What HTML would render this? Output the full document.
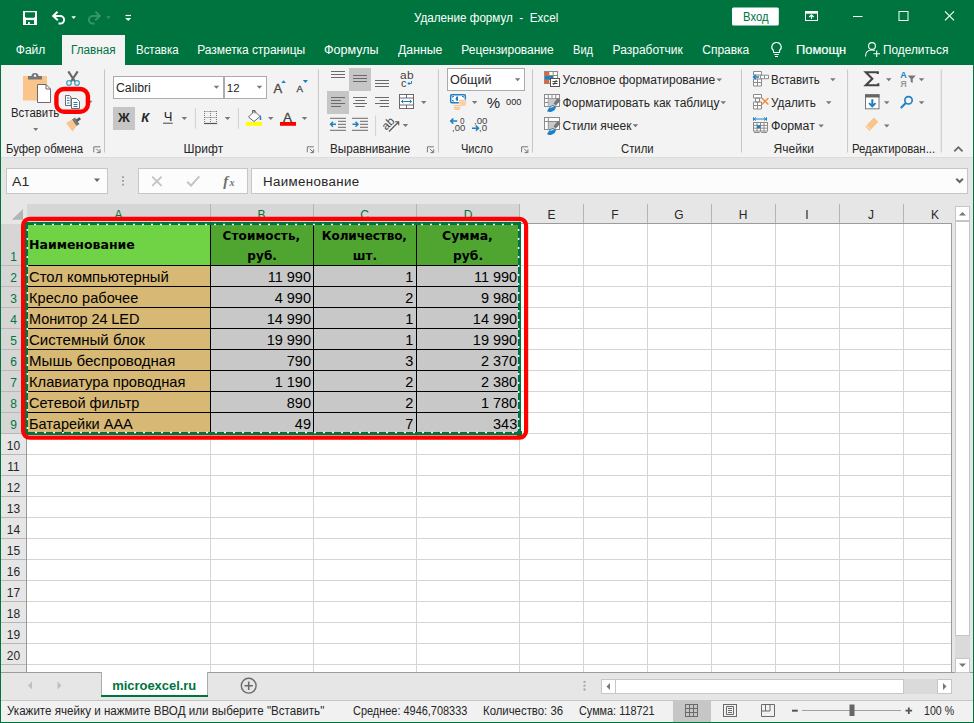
<!DOCTYPE html>
<html lang="ru"><head><meta charset="utf-8"><title>Удаление формул - Excel</title>
<style>
html,body{margin:0;padding:0}
body{width:974px;height:723px;overflow:hidden;position:relative;background:#fff;font-family:"Liberation Sans",sans-serif}
.t{position:absolute;white-space:pre}
.b{position:absolute}
svg{position:absolute;overflow:visible}
</style></head><body>
<div class="b" style="left:0px;top:0px;width:974px;height:65px;background:#00743f;"></div>
<div class="b" style="left:62px;top:35px;width:63px;height:30px;background:#f3f3f3;"></div>
<div class="b" style="left:0px;top:65px;width:974px;height:92px;background:#f3f3f3;"></div>
<div class="b" style="left:0px;top:157px;width:974px;height:1px;background:#dcdcdc;"></div>
<div class="b" style="left:0px;top:158px;width:974px;height:46px;background:#e6e6e6;"></div>
<div class="b" style="left:0px;top:204px;width:974px;height:468px;background:#fff;"></div>
<div class="b" style="left:0px;top:204px;width:952px;height:19px;background:#e6e6e6;"></div>
<div class="b" style="left:0px;top:204px;width:27px;height:468px;background:#e6e6e6;"></div>
<div class="b" style="left:27px;top:204px;width:493px;height:19px;background:#d6d6d6;"></div>
<div class="b" style="left:0px;top:224px;width:27px;height:210px;background:#d6d6d6;"></div>
<div class="b" style="left:952px;top:204px;width:22px;height:468px;background:#e6e6e6;"></div>
<div class="b" style="left:27px;top:223px;width:925px;height:1px;background:#9b9b9b;"></div>
<div class="b" style="left:26px;top:223px;width:1px;height:449px;background:#9b9b9b;"></div>
<div class="b" style="left:210px;top:204px;width:1px;height:19px;background:#b4b4b4;"></div>
<div class="b" style="left:210px;top:224px;width:1px;height:448px;background:#d4d4d4;"></div>
<div class="b" style="left:313px;top:204px;width:1px;height:19px;background:#b4b4b4;"></div>
<div class="b" style="left:313px;top:224px;width:1px;height:448px;background:#d4d4d4;"></div>
<div class="b" style="left:416px;top:204px;width:1px;height:19px;background:#b4b4b4;"></div>
<div class="b" style="left:416px;top:224px;width:1px;height:448px;background:#d4d4d4;"></div>
<div class="b" style="left:519px;top:204px;width:1px;height:19px;background:#b4b4b4;"></div>
<div class="b" style="left:519px;top:224px;width:1px;height:448px;background:#d4d4d4;"></div>
<div class="b" style="left:583px;top:204px;width:1px;height:19px;background:#b4b4b4;"></div>
<div class="b" style="left:583px;top:224px;width:1px;height:448px;background:#d4d4d4;"></div>
<div class="b" style="left:647px;top:204px;width:1px;height:19px;background:#b4b4b4;"></div>
<div class="b" style="left:647px;top:224px;width:1px;height:448px;background:#d4d4d4;"></div>
<div class="b" style="left:711px;top:204px;width:1px;height:19px;background:#b4b4b4;"></div>
<div class="b" style="left:711px;top:224px;width:1px;height:448px;background:#d4d4d4;"></div>
<div class="b" style="left:775px;top:204px;width:1px;height:19px;background:#b4b4b4;"></div>
<div class="b" style="left:775px;top:224px;width:1px;height:448px;background:#d4d4d4;"></div>
<div class="b" style="left:839px;top:204px;width:1px;height:19px;background:#b4b4b4;"></div>
<div class="b" style="left:839px;top:224px;width:1px;height:448px;background:#d4d4d4;"></div>
<div class="b" style="left:903px;top:204px;width:1px;height:19px;background:#b4b4b4;"></div>
<div class="b" style="left:903px;top:224px;width:1px;height:448px;background:#d4d4d4;"></div>
<div class="b" style="left:951px;top:224px;width:1px;height:448px;background:#9b9b9b;"></div>
<div class="b" style="left:27px;top:265px;width:924px;height:1px;background:#d4d4d4;"></div>
<div class="b" style="left:0px;top:265px;width:26px;height:1px;background:#b8b8b8;"></div>
<div class="b" style="left:27px;top:286px;width:924px;height:1px;background:#d4d4d4;"></div>
<div class="b" style="left:0px;top:286px;width:26px;height:1px;background:#b8b8b8;"></div>
<div class="b" style="left:27px;top:307px;width:924px;height:1px;background:#d4d4d4;"></div>
<div class="b" style="left:0px;top:307px;width:26px;height:1px;background:#b8b8b8;"></div>
<div class="b" style="left:27px;top:328px;width:924px;height:1px;background:#d4d4d4;"></div>
<div class="b" style="left:0px;top:328px;width:26px;height:1px;background:#b8b8b8;"></div>
<div class="b" style="left:27px;top:349px;width:924px;height:1px;background:#d4d4d4;"></div>
<div class="b" style="left:0px;top:349px;width:26px;height:1px;background:#b8b8b8;"></div>
<div class="b" style="left:27px;top:370px;width:924px;height:1px;background:#d4d4d4;"></div>
<div class="b" style="left:0px;top:370px;width:26px;height:1px;background:#b8b8b8;"></div>
<div class="b" style="left:27px;top:391px;width:924px;height:1px;background:#d4d4d4;"></div>
<div class="b" style="left:0px;top:391px;width:26px;height:1px;background:#b8b8b8;"></div>
<div class="b" style="left:27px;top:412px;width:924px;height:1px;background:#d4d4d4;"></div>
<div class="b" style="left:0px;top:412px;width:26px;height:1px;background:#b8b8b8;"></div>
<div class="b" style="left:27px;top:433px;width:924px;height:1px;background:#d4d4d4;"></div>
<div class="b" style="left:0px;top:433px;width:26px;height:1px;background:#b8b8b8;"></div>
<div class="b" style="left:27px;top:454px;width:924px;height:1px;background:#d4d4d4;"></div>
<div class="b" style="left:0px;top:454px;width:26px;height:1px;background:#b8b8b8;"></div>
<div class="b" style="left:27px;top:475px;width:924px;height:1px;background:#d4d4d4;"></div>
<div class="b" style="left:0px;top:475px;width:26px;height:1px;background:#b8b8b8;"></div>
<div class="b" style="left:27px;top:496px;width:924px;height:1px;background:#d4d4d4;"></div>
<div class="b" style="left:0px;top:496px;width:26px;height:1px;background:#b8b8b8;"></div>
<div class="b" style="left:27px;top:517px;width:924px;height:1px;background:#d4d4d4;"></div>
<div class="b" style="left:0px;top:517px;width:26px;height:1px;background:#b8b8b8;"></div>
<div class="b" style="left:27px;top:538px;width:924px;height:1px;background:#d4d4d4;"></div>
<div class="b" style="left:0px;top:538px;width:26px;height:1px;background:#b8b8b8;"></div>
<div class="b" style="left:27px;top:559px;width:924px;height:1px;background:#d4d4d4;"></div>
<div class="b" style="left:0px;top:559px;width:26px;height:1px;background:#b8b8b8;"></div>
<div class="b" style="left:27px;top:580px;width:924px;height:1px;background:#d4d4d4;"></div>
<div class="b" style="left:0px;top:580px;width:26px;height:1px;background:#b8b8b8;"></div>
<div class="b" style="left:27px;top:601px;width:924px;height:1px;background:#d4d4d4;"></div>
<div class="b" style="left:0px;top:601px;width:26px;height:1px;background:#b8b8b8;"></div>
<div class="b" style="left:27px;top:622px;width:924px;height:1px;background:#d4d4d4;"></div>
<div class="b" style="left:0px;top:622px;width:26px;height:1px;background:#b8b8b8;"></div>
<div class="b" style="left:27px;top:643px;width:924px;height:1px;background:#d4d4d4;"></div>
<div class="b" style="left:0px;top:643px;width:26px;height:1px;background:#b8b8b8;"></div>
<div class="b" style="left:27px;top:664px;width:924px;height:1px;background:#d4d4d4;"></div>
<div class="b" style="left:0px;top:664px;width:26px;height:1px;background:#b8b8b8;"></div>
<div class="b" style="left:27px;top:224px;width:183px;height:41px;background:#70d245;"></div>
<div class="b" style="left:211px;top:224px;width:308px;height:41px;background:#4fa530;"></div>
<div class="b" style="left:27px;top:266px;width:183px;height:167px;background:#d7b875;"></div>
<div class="b" style="left:211px;top:266px;width:308px;height:167px;background:#c8c8c8;"></div>
<div class="b" style="left:210px;top:224px;width:1px;height:209px;background:#000;"></div>
<div class="b" style="left:313px;top:224px;width:1px;height:209px;background:#000;"></div>
<div class="b" style="left:416px;top:224px;width:1px;height:209px;background:#000;"></div>
<div class="b" style="left:27px;top:265px;width:492px;height:1px;background:#000;"></div>
<div class="b" style="left:27px;top:286px;width:492px;height:1px;background:#000;"></div>
<div class="b" style="left:27px;top:307px;width:492px;height:1px;background:#000;"></div>
<div class="b" style="left:27px;top:328px;width:492px;height:1px;background:#000;"></div>
<div class="b" style="left:27px;top:349px;width:492px;height:1px;background:#000;"></div>
<div class="b" style="left:27px;top:370px;width:492px;height:1px;background:#000;"></div>
<div class="b" style="left:27px;top:391px;width:492px;height:1px;background:#000;"></div>
<div class="b" style="left:27px;top:412px;width:492px;height:1px;background:#000;"></div>
<svg style="left:0;top:0" width="974" height="723"><rect x="26.5" y="223.5" width="493" height="210" fill="none" stroke="#00743f" stroke-width="3"/><path d="M34 224.4H518M518.6 229V432M514 432.6H28M27.4 429V225" fill="none" stroke="#fff" stroke-width="1.5" stroke-dasharray="2 7"/><rect x="517" y="431" width="5" height="5" fill="#00743f"/></svg>
<div class="b" style="left:0px;top:672px;width:974px;height:28px;background:#e6e6e6;"></div>
<div class="b" style="left:0px;top:672px;width:974px;height:1px;background:#9b9b9b;"></div>
<div class="b" style="left:101px;top:672px;width:107px;height:23px;background:#fff;"></div>
<div class="b" style="left:101px;top:694.5px;width:107px;height:2.5px;background:#00743f;"></div>
<div class="b" style="left:101px;top:672px;width:1px;height:23px;background:#ababab;"></div>
<div class="b" style="left:207px;top:672px;width:1px;height:23px;background:#ababab;"></div>
<div class="b" style="left:0px;top:700px;width:974px;height:1px;background:#c6c6c6;"></div>
<div class="b" style="left:0px;top:701px;width:974px;height:22px;background:#f1f1f1;"></div>
<div class="b" style="left:0px;top:0px;width:1px;height:723px;background:#00743f;"></div>
<div class="b" style="left:972.5px;top:65px;width:1.5px;height:658px;background:#00743f;"></div>
<div class="b" style="left:0px;top:722px;width:974px;height:1px;background:#00743f;"></div>
<svg style="left:0;top:0" width="974" height="723" viewBox="0 0 974 723"><path d="M104.5 69.5V152.5" stroke="#c6c6c6" stroke-width="1"/><path d="M318.4 69.5V152.5" stroke="#c6c6c6" stroke-width="1"/><path d="M438.4 69.5V152.5" stroke="#c6c6c6" stroke-width="1"/><path d="M532.5 69.5V152.5" stroke="#c6c6c6" stroke-width="1"/><path d="M741.5 69.5V152.5" stroke="#c6c6c6" stroke-width="1"/><path d="M847.6 69.5V152.5" stroke="#c6c6c6" stroke-width="1"/><path d="M941.2 69.5V152.5" stroke="#c6c6c6" stroke-width="1"/><rect x="113.5" y="76.5" width="110" height="22" fill="#fff" stroke="#ababab" stroke-width="1"/><rect x="224.5" y="76.5" width="42" height="22" fill="#fff" stroke="#ababab" stroke-width="1"/><rect x="447.5" y="68.5" width="77" height="22" fill="#fff" stroke="#ababab" stroke-width="1"/><path d="M213.7 85.7 h5.5 l-2.75 3 z" fill="#777"/><path d="M256.7 85.7 h5.5 l-2.75 3 z" fill="#777"/><path d="M514.9 78.3 h5.5 l-2.75 3 z" fill="#777"/><rect x="113" y="107" width="22" height="23" fill="#c6c6c6"/><rect x="349" y="68" width="22" height="23" fill="#c6c6c6"/><rect x="327" y="91" width="22" height="23" fill="#c6c6c6"/><rect x="23" y="76" width="24" height="24.5" fill="#fbc48b"/><path d="M28 79.5v-3.5h3.5a3.5 3 0 0 1 7 0h3.5v3.5z" fill="#777"/><circle cx="35" cy="75.7" r="1.2" fill="#f3f3f3"/><path d="M37.5 84.5h8.5l4.5 4.5v13.5h-13z" fill="#fff" stroke="#6a6a6a" stroke-width="1"/><path d="M46 84.5v4.5h4.5" fill="none" stroke="#6a6a6a" stroke-width="1"/><path d="M33.2 128 h5 l-2.5 3 z" fill="#777"/><path d="M68.3 71.3l6.700 10.200M77.700 71.300l-6.700 10.200" stroke="#666" stroke-width="2.100" fill="none"/><circle cx="69" cy="83" r="2.3" fill="none" stroke="#3fa7c4" stroke-width="1.3"/><circle cx="77" cy="83" r="2.3" fill="none" stroke="#3fa7c4" stroke-width="1.3"/><path d="M65.5 95.5h4l1.5 1.5v8.5h-5.5z" fill="#fff" stroke="#6a6a6a"/><path d="M71.500 98.500h5l3 3v7h-8z" fill="#fff" stroke="#6a6a6a"/><path d="M67 98h2.5M67 100.5h2.5M67 103h2.5M73.500 102.500h4M73.500 104.500h4M73.500 106.500h4" stroke="#1e7fc2" stroke-width="1"/><path d="M87 100.8 h5.5 l-2.75 3 z" fill="#777"/><rect x="56.400" y="89" width="31.500" height="22.700" rx="7.500" ry="7.500" fill="none" stroke="#ff0000" stroke-width="4.400"/><path d="M66 123l6 -3.5 4.5 6.5 -4 5.5z" fill="#fbc48b"/><path d="M72 119.5l3-2 4.5 6.5-3 2z" fill="#777"/><path d="M76 119.5l3.5-2.3 1.5 2-3.5 2.5z" fill="#555"/><path d="M93.8 152.3v-5.5h6.5" fill="none" stroke="#777" stroke-width="1"/><path d="M96.3 148.8l3.5 3.5m0.3 -3v3.3h-3.3" fill="none" stroke="#777" stroke-width="1"/><path d="M281.3 83l2.3-2.8 2.3 2.8z" fill="#1e7fc2"/><path d="M302.8 80h5.2l-2.6 3z" fill="#1e7fc2"/><path d="M163 123.2H172.7" stroke="#444" stroke-width="1"/><path d="M181.6 116.9 h5.5 l-2.75 3 z" fill="#777"/><path d="M195.4 108V128.7" stroke="#d0d0d0" stroke-width="1"/><path d="M204.5 111.5H217" stroke="#777" stroke-width="1" stroke-dasharray="1 1"/><path d="M204.5 117.5H217" stroke="#777" stroke-width="1" stroke-dasharray="1 1"/><path d="M204.5 111V123" stroke="#777" stroke-width="1" stroke-dasharray="1 1"/><path d="M210.5 111V123" stroke="#777" stroke-width="1" stroke-dasharray="1 1"/><path d="M216.5 111V123" stroke="#777" stroke-width="1" stroke-dasharray="1 1"/><path d="M204 123.5H217.2" stroke="#555" stroke-width="1.2"/><path d="M224.8 116.9 h5.5 l-2.75 3 z" fill="#777"/><path d="M238.4 108V128.7" stroke="#d0d0d0" stroke-width="1"/><path d="M248.5 117l6-6 5.5 5.5-6 5z" fill="#fff" stroke="#666" stroke-width="1"/><path d="M252.5 113v-2.5h2.5v3" fill="none" stroke="#666" stroke-width="1"/><path d="M260 114.5q2 2.5 1.3 5.5h-1.6z" fill="#1e7fc2"/><rect x="245.8" y="122" width="16.3" height="3.8" fill="#ffff00"/><path d="M268 116.9 h5.5 l-2.75 3 z" fill="#777"/><rect x="280" y="122" width="16" height="3.8" fill="#ff0000"/><path d="M301.8 116.9 h5.5 l-2.75 3 z" fill="#777"/><path d="M307.3 152.3v-5.5h6.5" fill="none" stroke="#777" stroke-width="1"/><path d="M309.8 148.8l3.5 3.5m0.3 -3v3.3h-3.3" fill="none" stroke="#777" stroke-width="1"/><path d="M331 71.5H345" stroke="#6a6a6a" stroke-width="1"/><path d="M331 74.5H345" stroke="#6a6a6a" stroke-width="1"/><path d="M331 77.5H345" stroke="#6a6a6a" stroke-width="1"/><path d="M353 75.5H367" stroke="#6a6a6a" stroke-width="1"/><path d="M353 78.5H367" stroke="#6a6a6a" stroke-width="1"/><path d="M353 81.5H367" stroke="#6a6a6a" stroke-width="1"/><path d="M375 80.5H389" stroke="#6a6a6a" stroke-width="1"/><path d="M375 83.5H389" stroke="#6a6a6a" stroke-width="1"/><path d="M375 86.5H389" stroke="#6a6a6a" stroke-width="1"/><path d="M331 97.5H345" stroke="#6a6a6a" stroke-width="1"/><path d="M353 97.5H367" stroke="#6a6a6a" stroke-width="1"/><path d="M375 97.5H389" stroke="#6a6a6a" stroke-width="1"/><path d="M331 100.5H341" stroke="#6a6a6a" stroke-width="1"/><path d="M355.3 100.5H364.8" stroke="#6a6a6a" stroke-width="1"/><path d="M379.7 100.5H389" stroke="#6a6a6a" stroke-width="1"/><path d="M331 103.5H345" stroke="#6a6a6a" stroke-width="1"/><path d="M353 103.5H367" stroke="#6a6a6a" stroke-width="1"/><path d="M375 103.5H389" stroke="#6a6a6a" stroke-width="1"/><path d="M331 106.5H341" stroke="#6a6a6a" stroke-width="1"/><path d="M355.3 106.5H364.8" stroke="#6a6a6a" stroke-width="1"/><path d="M379.7 106.5H389" stroke="#6a6a6a" stroke-width="1"/><rect x="399.5" y="94.5" width="14" height="14" fill="#fff" stroke="#6a6a6a"/><path d="M399.5 98H413.5M399.5 105H413.5M406.5 94.5V98M406.5 105v3.5" stroke="#6a6a6a" fill="none"/><path d="M401.5 101.5H411.5M403.3 99.8l-1.8 1.7 1.8 1.7M409.7 99.8l1.8 1.7-1.8 1.7" stroke="#1e7fc2" fill="none" stroke-width="1"/><path d="M421 101 h5.5 l-2.75 3 z" fill="#777"/><path d="M330 118.3H346" stroke="#6a6a6a" stroke-width="1"/><path d="M330 130.3H346" stroke="#6a6a6a" stroke-width="1"/><path d="M338 121.3H346" stroke="#6a6a6a" stroke-width="1"/><path d="M338 124.3H346" stroke="#6a6a6a" stroke-width="1"/><path d="M338 127.3H346" stroke="#6a6a6a" stroke-width="1"/><path d="M352 118.3H368" stroke="#6a6a6a" stroke-width="1"/><path d="M352 130.3H368" stroke="#6a6a6a" stroke-width="1"/><path d="M360 121.3H368" stroke="#6a6a6a" stroke-width="1"/><path d="M360 124.3H368" stroke="#6a6a6a" stroke-width="1"/><path d="M360 127.3H368" stroke="#6a6a6a" stroke-width="1"/><path d="M336 124.3h-5.5m2.5-2.5l-2.5 2.5 2.5 2.5" stroke="#1e7fc2" stroke-width="1.4" fill="none"/><path d="M352.5 124.3h5.5m-2.5-2.5l2.5 2.5-2.5 2.5" stroke="#1e7fc2" stroke-width="1.4" fill="none"/><path d="M375.6 115.5V136" stroke="#d0d0d0" stroke-width="1"/><path d="M389 131.5l9.5-9.5m-3.3-.3h3.5v3.5" stroke="#555" stroke-width="1.1" fill="none"/><path d="M402.7 124 h5.5 l-2.75 3 z" fill="#777"/><path d="M427.4 152.3v-5.5h6.5" fill="none" stroke="#777" stroke-width="1"/><path d="M429.9 148.8l3.5 3.5m0.3 -3v3.3h-3.3" fill="none" stroke="#777" stroke-width="1"/><path d="M411.5 81v2.5h-3.5m1.5-1.5l-1.5 1.5 1.5 1.5" stroke="#1e7fc2" stroke-width="1" fill="none"/><rect x="450.700" y="94.700" width="14.600" height="8" rx="1" fill="#fff" stroke="#1e7fc2" stroke-width="1.500"/><path d="M452.500 97.500v-1h1.500M463.500 97.500v-1h-1.500M452.500 100v1h1.500" stroke="#1e7fc2" stroke-width="1" fill="none"/><path d="M458 96.300a2.400 2.400 0 1 0 0 4.800z" fill="#1e7fc2"/><rect x="458.800" y="99.500" width="7.600" height="7.200" fill="#f3f3f3"/><path d="M459.300 100.800h6.800M459.300 102.900h6.800M459.800 105h5.800" stroke="#fbc48b" stroke-width="1.500"/><rect x="453.300" y="104.300" width="7.600" height="5.600" fill="#f3f3f3"/><path d="M453.800 105.600h6.800M453.800 107.600h6.800M454.500 109.300h5.400" stroke="#fbc48b" stroke-width="1.400"/><path d="M471.9 101 h5.5 l-2.75 3 z" fill="#777"/><path d="M521.6 152.3v-5.5h6.5" fill="none" stroke="#777" stroke-width="1"/><path d="M524.1 148.8l3.5 3.5m0.3 -3v3.3h-3.3" fill="none" stroke="#777" stroke-width="1"/><path d="M457.2 121.1h-6.5m2.6-2.6l-2.6 2.6 2.6 2.6" stroke="#1e7fc2" stroke-width="1.5" fill="none"/><path d="M472 128.2h6.5m-2.6-2.6l2.6 2.6-2.6 2.6" stroke="#1e7fc2" stroke-width="1.5" fill="none"/><rect x="544.5" y="71.5" width="13" height="12" fill="#fff" stroke="#8a8a8a"/><path d="M548.833 71.5V83.5M553.167 71.5V83.5M544.5 75.5H557.5M544.5 79.5H557.5" stroke="#8a8a8a" fill="none"/><rect x="545" y="72" width="4" height="3.5" fill="#e8622c"/><rect x="545" y="80" width="4" height="3.5" fill="#e8622c"/><rect x="545" y="76" width="8" height="3.5" fill="#1e7fc2"/><rect x="550.5" y="78.5" width="9" height="8" fill="#fff" stroke="#555"/><path d="M552.5 81.5h5M552.5 83.5h5M556.5 80l-3 5" stroke="#333" stroke-width="0.9"/><rect x="544.5" y="94.5" width="15" height="12" fill="#fff" stroke="#8a8a8a"/><path d="M548.25 94.5V106.5M552 94.5V106.5M555.75 94.5V106.5M544.5 98.5H559.5M544.5 102.5H559.5" stroke="#8a8a8a" fill="none"/><rect x="548.5" y="98.7" width="7.2" height="7.6" fill="#c8c8c8"/><path d="M553.5 103.5l4-5.5 3 2.3-4.5 5.2z" fill="#777"/><path d="M548 109.5q2-4 5-4.5l3 2.3q-1 3.5-4.5 4.5-2 .8-4.5-.5z" fill="#1e7fc2"/><path d="M550.5 107.7q1.5-1.5 3-1" stroke="#fff" stroke-width="1" fill="none"/><rect x="544.5" y="117.5" width="15" height="12" fill="#fff" stroke="#8a8a8a"/><path d="" stroke="#8a8a8a" fill="none"/><path d="M544.5 121.5h15M548.3 117.5v12" stroke="#8a8a8a" fill="none"/><rect x="549" y="122" width="7" height="7" fill="#c8c8c8"/><path d="M553.5 126.5l4-5.5 3 2.3-4.5 5.2z" fill="#777"/><path d="M548 132.5q2-4 5-4.5l3 2.3q-1 3.5-4.5 4.5-2 .8-4.5-.5z" fill="#1e7fc2"/><path d="M550.5 130.7q1.5-1.5 3-1" stroke="#fff" stroke-width="1" fill="none"/><path d="M716.5 78.5 h5.5 l-2.75 3 z" fill="#777"/><path d="M720.5 101.3 h5.5 l-2.75 3 z" fill="#777"/><path d="M632.7 124.3 h5.5 l-2.75 3 z" fill="#777"/><path d="M753.5 71.5h8v3.5h-8zM753.5 79h8v3.5h-8zM753.5 82.500h8v3.500h-8zM757.5 79v7" fill="#fff" stroke="#8a8a8a"/><path d="M760.5 75.2h8v3.500h-8zM764.500 75.200v3.500" fill="#fff" stroke="#8a8a8a"/><path d="M759 77h-5.500m2.300-2.300l-2.300 2.300 2.300 2.300" stroke="#1e7fc2" stroke-width="1.400" fill="none"/><path d="M753.500 94.500h8v3.500h-8zM753.500 102h8v3.500h-8zM753.500 105.500h8v3.500h-8zM757.500 102v7M755.500 98h4v4h-4z" fill="#fff" stroke="#8a8a8a"/><path d="M761.800 98l6.600 6.600M768.400 98l-6.600 6.600" stroke="#ec8a3e" stroke-width="1.400"/><path d="M754 119h12M753.500 117.300v3.400M766.500 117.300v3.400M756 117.500l-1.800 1.500 1.800 1.500M764 117.500l1.800 1.500-1.800 1.500" stroke="#1e7fc2" fill="none"/><rect x="753.5" y="122.5" width="14" height="8.5" fill="#fff" stroke="#8a8a8a"/><path d="M757 122.5V131M760.5 122.5V131M764 122.5V131M753.5 125.333H767.5M753.5 128.167H767.5" stroke="#8a8a8a" fill="none"/><rect x="757" y="125.300" width="3.500" height="3" fill="#1e7fc2"/><path d="M754 132.500h5.500l1 -1 1 1h5.500" stroke="#8a8a8a" fill="none"/><path d="M830.1 78.3 h5.5 l-2.75 3 z" fill="#777"/><path d="M826 101.3 h5.5 l-2.75 3 z" fill="#777"/><path d="M818.4 124.4 h5.5 l-2.75 3 z" fill="#777"/><path d="M877.800 74v-1.800h-12l6.500 6.500-6.500 6.500h12.500v-2" fill="none" stroke="#444" stroke-width="2.100" stroke-linejoin="miter"/><path d="M886 78.3 h5.5 l-2.75 3 z" fill="#777"/><path d="M907.700 75.600h8l-3 3.500v4l-2 -1.200v-2.800z" fill="#777"/><path d="M918.8 78.3 h5.5 l-2.75 3 z" fill="#777"/><rect x="865.500" y="94.800" width="13.500" height="14" fill="#fff" stroke="#777"/><rect x="865" y="94.300" width="14.500" height="3.200" fill="#666"/><path d="M872.300 99.300v7.200m-3.200-3.400l3.200 3.300 3.200-3.300" stroke="#1e7fc2" stroke-width="2" fill="none"/><path d="M884 101.3 h5.5 l-2.75 3 z" fill="#777"/><circle cx="908.500" cy="100.300" r="3.700" fill="none" stroke="#1e7fc2" stroke-width="1.600"/><path d="M905.800 103l-5 5" stroke="#1e7fc2" stroke-width="2"/><path d="M918.8 101.3 h5.5 l-2.75 3 z" fill="#777"/><path d="M865.200 126.500l8.700-9 4.400 4.200-8.700 9.200z" fill="#fbc48b"/><path d="M866.300 125.300l4.500 4.300" stroke="#f3f3f3" stroke-width="0.800"/><path d="M865.500 127.500l4 3.500" stroke="#f3f3f3" stroke-width="0"/><path d="M884 124.5 h5.5 l-2.75 3 z" fill="#777"/><path d="M954.300 151.300l4.100-4.100 4.100 4.100" stroke="#666" stroke-width="1.800" fill="none"/><rect x="23" y="11" width="14" height="14" fill="#fff"/><path d="M25 12.200h10v4.200l-1 1.300h-8l-1-1.300z" fill="#00743f"/><rect x="26" y="20.100" width="8" height="3.900" fill="#00743f"/><rect x="28" y="22" width="1.800" height="2.100" fill="#fff"/><path d="M57.500 11.700l-4.300 4.300 4.600 4.300M53.500 16h6.800a3.800 3.800 0 0 1 0 7.600h-1.800" fill="none" stroke="#fff" stroke-width="2"/><path d="M71.400 16.200h4.600l-2.300 2.700z" fill="#fff"/><path d="M95.500 11.700l4.300 4.300-4.600 4.300M99.500 16h-6.800a3.800 3.800 0 0 0 0 7.600h1.800" fill="none" stroke="#35956a" stroke-width="2"/><path d="M106.200 16.200h4.500l-2.250 2.700z" fill="#35956a"/><path d="M125.500 15.500h5.500" stroke="#fff" stroke-width="1.200"/><path d="M125.200 18h6l-3 3z" fill="#fff"/><rect x="732" y="7.500" width="46.800" height="18" rx="1.500" fill="#fff"/><rect x="805.500" y="11.500" width="12" height="9" fill="none" stroke="#fff" stroke-width="1"/><path d="M805.500 12.800h12" stroke="#fff" stroke-width="1.800"/><path d="M811.500 19v-4.200m-2.200 2.200l2.200-2.200 2.200 2.200" stroke="#fff" stroke-width="1.200" fill="none"/><path d="M853 16.500h9.500" stroke="#fff" stroke-width="1"/><rect x="899" y="11.500" width="9" height="9" fill="none" stroke="#fff" stroke-width="1"/><path d="M945 11.300l9 9M954 11.300l-9 9" stroke="#fff" stroke-width="1.100"/><path d="M776.500 42.500a4.500 4.500 0 0 1 3 8v2h-6v-2a4.500 4.500 0 0 1 3-8zM774.300 54.500h4.400M775 56.500h3" fill="none" stroke="#fff" stroke-width="1.100"/><circle cx="872" cy="46" r="3.400" fill="none" stroke="#fff" stroke-width="1.100"/><path d="M865.500 56.500c0-4.500 3-6.500 6.500-6.500 1 0 2 .200 2.800.600" fill="none" stroke="#fff" stroke-width="1.100"/><path d="M876.700 50.500v6.500M873.500 53.700h6.500" stroke="#fff" stroke-width="1.100"/><rect x="6.5" y="168.5" width="101" height="25" fill="#fcfcfc" stroke="#c6c6c6" stroke-width="1"/><rect x="138.5" y="168.5" width="109" height="25" fill="#fcfcfc" stroke="#c6c6c6" stroke-width="1"/><rect x="251.5" y="168.5" width="716" height="25" fill="#fcfcfc" stroke="#c6c6c6" stroke-width="1"/><path d="M94 178.5 h6 l-3 3.5 z" fill="#666"/><path d="M123 176.200v10" stroke="#a0a0a0" stroke-width="2" stroke-dasharray="1.800 2"/><path d="M152.200 176.600l9.400 9.200M161.600 176.600l-9.400 9.200" stroke="#c2c2c2" stroke-width="1.800"/><path d="M187.200 181.800l3.800 3.800 8.300-9.300" stroke="#c2c2c2" stroke-width="2" fill="none"/><path d="M956.300 178.700l3.300 3.300 3.300-3.300" stroke="#666" stroke-width="2" fill="none"/><path d="M23 209v10.700h-11.200z" fill="#b5b5b5"/><rect x="955" y="636" width="15" height="22" fill="#dadada"/><rect x="904" y="679" width="33" height="15" fill="#dadada"/><rect x="955.5" y="206.5" width="14" height="14" fill="#fff" stroke="#c6c6c6" stroke-width="1"/><path d="M959 215.500l3.500-3.500 3.500 3.500z" fill="#777"/><rect x="955.5" y="221.5" width="14" height="414" fill="#fff" stroke="#c6c6c6" stroke-width="1"/><rect x="955.5" y="658.5" width="14" height="14" fill="#fff" stroke="#c6c6c6" stroke-width="1"/><path d="M959 663.500h7l-3.500 3.500z" fill="#777"/><rect x="601.5" y="679.5" width="14" height="14" fill="#fff" stroke="#c6c6c6" stroke-width="1"/><path d="M610 683l-3.500 3.500 3.500 3.500z" fill="#777"/><rect x="615.5" y="679.5" width="288" height="14" fill="#fff" stroke="#c6c6c6" stroke-width="1"/><rect x="937.5" y="679.5" width="14" height="14" fill="#fff" stroke="#c6c6c6" stroke-width="1"/><path d="M943 683l3.500 3.500-3.500 3.500z" fill="#777"/><path d="M584.500 681v10" stroke="#a0a0a0" stroke-width="2" stroke-dasharray="1.800 2"/><path d="M32 681.500l-4 4 4 4z" fill="#c0c0c0"/><path d="M57.500 681.500l4 4-4 4z" fill="#c0c0c0"/><circle cx="248.700" cy="685.700" r="7.400" fill="none" stroke="#6a6a6a" stroke-width="1.400"/><path d="M244.500 685.700h8.400M248.700 681.500v8.400" stroke="#6a6a6a" stroke-width="1.600"/><rect x="673" y="701" width="38" height="21" fill="#c6c6c6"/><rect x="685.5" y="704.5" width="12" height="12" fill="none" stroke="#6a6a6a"/><path d="M689.5 704.5V716.5M693.5 704.5V716.5M685.5 708.5H697.5M685.5 712.5H697.5" stroke="#6a6a6a" fill="none"/><rect x="723.500" y="704.500" width="13" height="12" fill="none" stroke="#6a6a6a"/><path d="M726.500 706.500h7v8h-7zM728 708.500h4M728 710.500h4M728 712.500h4" fill="none" stroke="#6a6a6a"/><path d="M761.500 704.500h13v12h-13zM765.500 704.500v6.500M770 704.500v6.500M761.500 711h8.500" fill="none" stroke="#6a6a6a"/><path d="M792 710.700h5.800" stroke="#555" stroke-width="2"/><path d="M802 710.5H901" stroke="#a0a0a0" stroke-width="1"/><rect x="849.500" y="704.500" width="5" height="11.500" fill="#666"/><path d="M905.500 710.700h6.600M908.800 707.400v6.600" stroke="#555" stroke-width="1.800"/></svg>
<span class="t" style="left:413.91px;top:12.00px;font-size:12.5px;line-height:12.5px;color:#fff;transform:scaleX(0.9333);transform-origin:0 0;">Удаление формул  -  Excel</span>
<span class="t" style="left:15.84px;top:44.00px;font-size:12px;line-height:12px;color:#fff;letter-spacing:-0.065px;">Файл</span>
<span class="t" style="left:70.59px;top:44.00px;font-size:12px;line-height:12px;color:#00743f;transform:scaleX(0.9755);transform-origin:0 0;">Главная</span>
<span class="t" style="left:135.59px;top:44.00px;font-size:12px;line-height:12px;color:#fff;transform:scaleX(0.9543);transform-origin:0 0;">Вставка</span>
<span class="t" style="left:197.34px;top:44.00px;font-size:12px;line-height:12px;color:#fff;letter-spacing:-0.066px;">Разметка страницы</span>
<span class="t" style="left:324.34px;top:44.00px;font-size:12px;line-height:12px;color:#fff;transform:scaleX(1.0450);transform-origin:0 0;">Формулы</span>
<span class="t" style="left:398.09px;top:44.00px;font-size:12px;line-height:12px;color:#fff;transform:scaleX(1.0222);transform-origin:0 0;">Данные</span>
<span class="t" style="left:461.34px;top:44.00px;font-size:12px;line-height:12px;color:#fff;letter-spacing:-0.027px;">Рецензирование</span>
<span class="t" style="left:573.09px;top:44.00px;font-size:12px;line-height:12px;color:#fff;transform:scaleX(0.9241);transform-origin:0 0;">Вид</span>
<span class="t" style="left:612.59px;top:44.00px;font-size:12px;line-height:12px;color:#fff;letter-spacing:0.009px;">Разработчик</span>
<span class="t" style="left:702.34px;top:44.00px;font-size:12px;line-height:12px;color:#fff;letter-spacing:-0.043px;">Справка</span>
<span class="t" style="left:795.56px;top:44.00px;font-size:12.5px;line-height:12.5px;color:#fff;transform:scaleX(1.0299);transform-origin:0 0;-webkit-text-stroke:0.2px #fff;">Помощн</span>
<span class="t" style="left:883.34px;top:44.00px;font-size:12px;line-height:12px;color:#fff;transform:scaleX(0.9857);transform-origin:0 0;">Поделиться</span>
<span class="t" style="left:743.09px;top:11.00px;font-size:12px;line-height:12px;color:#00743f;transform:scaleX(0.9416);transform-origin:0 0;">Вход</span>
<span class="t" style="left:10.59px;top:107.00px;font-size:12px;line-height:12px;color:#262626;transform:scaleX(0.9498);transform-origin:0 0;">Вставить</span>
<span class="t" style="left:5.59px;top:143.00px;font-size:12px;line-height:12px;color:#262626;transform:scaleX(0.9451);transform-origin:0 0;">Буфер обмена</span>
<span class="t" style="left:183.59px;top:143.00px;font-size:12px;line-height:12px;color:#262626;letter-spacing:0.021px;">Шрифт</span>
<span class="t" style="left:115.84px;top:82.00px;font-size:12px;line-height:12px;color:#262626;transform:scaleX(1.0236);transform-origin:0 0;">Calibri</span>
<span class="t" style="left:226.87px;top:83.00px;font-size:11.5px;line-height:11.5px;color:#262626;letter-spacing:-0.032px;">12</span>
<span class="t" style="left:118.00px;top:111.00px;font-size:13px;line-height:13px;color:#262626;font-weight:bold;">Ж</span>
<span class="t" style="left:141.25px;top:111.00px;font-size:13px;line-height:13px;color:#262626;font-weight:bold;font-style:italic;">К</span>
<span class="t" style="left:163.75px;top:110.00px;font-size:13px;line-height:13px;color:#262626;">Ч</span>
<span class="t" style="left:329.84px;top:143.00px;font-size:12px;line-height:12px;color:#262626;transform:scaleX(0.9723);transform-origin:0 0;">Выравнивание</span>
<span class="t" style="left:460.59px;top:143.00px;font-size:12px;line-height:12px;color:#262626;transform:scaleX(0.9219);transform-origin:0 0;">Число</span>
<span class="t" style="left:449.94px;top:74.00px;font-size:12px;line-height:12px;color:#262626;transform:scaleX(1.0537);transform-origin:0 0;">Общий</span>
<span class="t" style="left:486.80px;top:95.00px;font-size:15px;line-height:15px;color:#262626;">%</span>
<span class="t" style="left:506.28px;top:97.00px;font-size:9.5px;line-height:9.5px;color:#262626;transform:scaleX(0.9739);transform-origin:0 0;">000</span>
<span class="t" style="left:562.59px;top:74.00px;font-size:12px;line-height:12px;color:#262626;">Условное форматирование</span>
<span class="t" style="left:562.59px;top:97.00px;font-size:12px;line-height:12px;color:#262626;letter-spacing:0.028px;">Форматировать как таблицу</span>
<span class="t" style="left:562.59px;top:120.00px;font-size:12px;line-height:12px;color:#262626;letter-spacing:-0.045px;">Стили ячеек</span>
<span class="t" style="left:620.59px;top:143.00px;font-size:12px;line-height:12px;color:#262626;transform:scaleX(0.9419);transform-origin:0 0;">Стили</span>
<span class="t" style="left:771.34px;top:74.00px;font-size:12px;line-height:12px;color:#262626;transform:scaleX(0.9596);transform-origin:0 0;">Вставить</span>
<span class="t" style="left:771.34px;top:97.00px;font-size:12px;line-height:12px;color:#262626;transform:scaleX(0.9780);transform-origin:0 0;">Удалить</span>
<span class="t" style="left:771.34px;top:120.00px;font-size:12px;line-height:12px;color:#262626;transform:scaleX(1.0277);transform-origin:0 0;">Формат</span>
<span class="t" style="left:773.59px;top:143.00px;font-size:12px;line-height:12px;color:#262626;letter-spacing:0.014px;">Ячейки</span>
<span class="t" style="left:851.84px;top:143.00px;font-size:12px;line-height:12px;color:#262626;transform:scaleX(0.9435);transform-origin:0 0;">Редактирован...</span>
<span class="t" style="left:12.29px;top:175.00px;font-size:13px;line-height:13px;color:#262626;letter-spacing:0.233px;transform:scaleX(1.0800);transform-origin:0 0;">A1</span>
<span class="t" style="left:262.57px;top:176.00px;font-size:12.3px;line-height:12.3px;color:#262626;letter-spacing:0.339px;transform:scaleX(1.0800);transform-origin:0 0;">Наименование</span>
<span class="t" style="left:114.49px;top:209.00px;font-size:12px;line-height:12px;color:#00743f;">A</span>
<span class="t" style="left:257.49px;top:209.00px;font-size:12px;line-height:12px;color:#00743f;">B</span>
<span class="t" style="left:360.16px;top:209.00px;font-size:12px;line-height:12px;color:#00743f;">C</span>
<span class="t" style="left:463.66px;top:209.00px;font-size:12px;line-height:12px;color:#00743f;">D</span>
<span class="t" style="left:547.49px;top:209.00px;font-size:12px;line-height:12px;color:#262626;">E</span>
<span class="t" style="left:611.33px;top:209.00px;font-size:12px;line-height:12px;color:#262626;">F</span>
<span class="t" style="left:674.33px;top:209.00px;font-size:12px;line-height:12px;color:#262626;">G</span>
<span class="t" style="left:738.66px;top:209.00px;font-size:12px;line-height:12px;color:#262626;">H</span>
<span class="t" style="left:805.33px;top:209.00px;font-size:12px;line-height:12px;color:#262626;">I</span>
<span class="t" style="left:868.00px;top:209.00px;font-size:12px;line-height:12px;color:#262626;">J</span>
<span class="t" style="left:930.99px;top:209.00px;font-size:12px;line-height:12px;color:#262626;">K</span>
<span class="t" style="left:10.16px;top:251.00px;font-size:12px;line-height:12px;color:#00743f;">1</span>
<span class="t" style="left:10.16px;top:272.00px;font-size:12px;line-height:12px;color:#00743f;">2</span>
<span class="t" style="left:10.16px;top:293.00px;font-size:12px;line-height:12px;color:#00743f;">3</span>
<span class="t" style="left:10.16px;top:314.00px;font-size:12px;line-height:12px;color:#00743f;">4</span>
<span class="t" style="left:10.16px;top:335.00px;font-size:12px;line-height:12px;color:#00743f;">5</span>
<span class="t" style="left:10.16px;top:356.00px;font-size:12px;line-height:12px;color:#00743f;">6</span>
<span class="t" style="left:10.16px;top:377.00px;font-size:12px;line-height:12px;color:#00743f;">7</span>
<span class="t" style="left:10.16px;top:398.00px;font-size:12px;line-height:12px;color:#00743f;">8</span>
<span class="t" style="left:10.16px;top:419.00px;font-size:12px;line-height:12px;color:#00743f;">9</span>
<span class="t" style="left:6.82px;top:440.00px;font-size:12px;line-height:12px;color:#262626;">10</span>
<span class="t" style="left:7.27px;top:461.00px;font-size:12px;line-height:12px;color:#262626;">11</span>
<span class="t" style="left:6.82px;top:482.00px;font-size:12px;line-height:12px;color:#262626;">12</span>
<span class="t" style="left:6.82px;top:503.00px;font-size:12px;line-height:12px;color:#262626;">13</span>
<span class="t" style="left:6.82px;top:524.00px;font-size:12px;line-height:12px;color:#262626;">14</span>
<span class="t" style="left:6.82px;top:545.00px;font-size:12px;line-height:12px;color:#262626;">15</span>
<span class="t" style="left:6.82px;top:566.00px;font-size:12px;line-height:12px;color:#262626;">16</span>
<span class="t" style="left:6.82px;top:587.00px;font-size:12px;line-height:12px;color:#262626;">17</span>
<span class="t" style="left:6.82px;top:608.00px;font-size:12px;line-height:12px;color:#262626;">18</span>
<span class="t" style="left:6.82px;top:629.00px;font-size:12px;line-height:12px;color:#262626;">19</span>
<span class="t" style="left:6.82px;top:650.00px;font-size:12px;line-height:12px;color:#262626;">20</span>
<span class="t" style="left:29.34px;top:239.00px;font-size:12px;line-height:12px;color:#000;font-family:'DejaVu Sans', 'Liberation Sans', sans-serif;font-weight:bold;transform:scaleX(1.0419);transform-origin:0 0;">Наименование</span>
<span class="t" style="left:222.59px;top:230.00px;font-size:12px;line-height:12px;color:#000;font-family:'DejaVu Sans', 'Liberation Sans', sans-serif;font-weight:bold;letter-spacing:0.098px;">Стоимость,</span>
<span class="t" style="left:247.34px;top:250.00px;font-size:12px;line-height:12px;color:#000;font-family:'DejaVu Sans', 'Liberation Sans', sans-serif;font-weight:bold;letter-spacing:0.070px;">руб.</span>
<span class="t" style="left:321.84px;top:230.00px;font-size:12px;line-height:12px;color:#000;font-family:'DejaVu Sans', 'Liberation Sans', sans-serif;font-weight:bold;letter-spacing:-0.102px;">Количество,</span>
<span class="t" style="left:352.87px;top:250.00px;font-size:12px;line-height:12px;color:#000;font-family:'DejaVu Sans', 'Liberation Sans', sans-serif;font-weight:bold;">шт.</span>
<span class="t" style="left:442.34px;top:230.00px;font-size:12px;line-height:12px;color:#000;font-family:'DejaVu Sans', 'Liberation Sans', sans-serif;font-weight:bold;transform:scaleX(1.0391);transform-origin:0 0;">Сумма,</span>
<span class="t" style="left:453.09px;top:250.00px;font-size:12px;line-height:12px;color:#000;font-family:'DejaVu Sans', 'Liberation Sans', sans-serif;font-weight:bold;transform:scaleX(1.0242);transform-origin:0 0;">руб.</span>
<span class="t" style="left:29.00px;top:270.00px;font-size:14.5px;line-height:14.5px;color:#000;transform:scaleX(1.0217);transform-origin:0 0;">Стол компьютерный</span>
<span class="t" style="left:267.72px;top:270.00px;font-size:14.5px;line-height:14.5px;color:#000;">11 990</span>
<span class="t" style="left:405.22px;top:270.00px;font-size:14.5px;line-height:14.5px;color:#000;">1</span>
<span class="t" style="left:473.92px;top:270.00px;font-size:14.5px;line-height:14.5px;color:#000;">11 990</span>
<span class="t" style="left:29.00px;top:291.00px;font-size:14.5px;line-height:14.5px;color:#000;letter-spacing:0.068px;">Кресло рабочее</span>
<span class="t" style="left:274.70px;top:291.00px;font-size:14.5px;line-height:14.5px;color:#000;">4 990</span>
<span class="t" style="left:405.22px;top:291.00px;font-size:14.5px;line-height:14.5px;color:#000;">2</span>
<span class="t" style="left:480.90px;top:291.00px;font-size:14.5px;line-height:14.5px;color:#000;">9 980</span>
<span class="t" style="left:29.00px;top:312.00px;font-size:14.5px;line-height:14.5px;color:#000;letter-spacing:-0.079px;">Монитор 24 LED</span>
<span class="t" style="left:266.64px;top:312.00px;font-size:14.5px;line-height:14.5px;color:#000;">14 990</span>
<span class="t" style="left:405.22px;top:312.00px;font-size:14.5px;line-height:14.5px;color:#000;">1</span>
<span class="t" style="left:472.84px;top:312.00px;font-size:14.5px;line-height:14.5px;color:#000;">14 990</span>
<span class="t" style="left:29.00px;top:333.00px;font-size:14.5px;line-height:14.5px;color:#000;transform:scaleX(1.0378);transform-origin:0 0;">Системный блок</span>
<span class="t" style="left:266.64px;top:333.00px;font-size:14.5px;line-height:14.5px;color:#000;">19 990</span>
<span class="t" style="left:405.22px;top:333.00px;font-size:14.5px;line-height:14.5px;color:#000;">1</span>
<span class="t" style="left:472.84px;top:333.00px;font-size:14.5px;line-height:14.5px;color:#000;">19 990</span>
<span class="t" style="left:29.00px;top:354.00px;font-size:14.5px;line-height:14.5px;color:#000;transform:scaleX(1.0395);transform-origin:0 0;">Мышь беспроводная</span>
<span class="t" style="left:286.80px;top:354.00px;font-size:14.5px;line-height:14.5px;color:#000;">790</span>
<span class="t" style="left:405.22px;top:354.00px;font-size:14.5px;line-height:14.5px;color:#000;">3</span>
<span class="t" style="left:480.90px;top:354.00px;font-size:14.5px;line-height:14.5px;color:#000;">2 370</span>
<span class="t" style="left:29.00px;top:375.00px;font-size:14.5px;line-height:14.5px;color:#000;transform:scaleX(1.0141);transform-origin:0 0;">Клавиатура проводная</span>
<span class="t" style="left:274.70px;top:375.00px;font-size:14.5px;line-height:14.5px;color:#000;">1 190</span>
<span class="t" style="left:405.22px;top:375.00px;font-size:14.5px;line-height:14.5px;color:#000;">2</span>
<span class="t" style="left:480.90px;top:375.00px;font-size:14.5px;line-height:14.5px;color:#000;">2 380</span>
<span class="t" style="left:29.00px;top:396.00px;font-size:14.5px;line-height:14.5px;color:#000;letter-spacing:0.034px;">Сетевой фильтр</span>
<span class="t" style="left:286.80px;top:396.00px;font-size:14.5px;line-height:14.5px;color:#000;">890</span>
<span class="t" style="left:405.22px;top:396.00px;font-size:14.5px;line-height:14.5px;color:#000;">2</span>
<span class="t" style="left:480.90px;top:396.00px;font-size:14.5px;line-height:14.5px;color:#000;">1 780</span>
<span class="t" style="left:29.00px;top:417.00px;font-size:14.5px;line-height:14.5px;color:#000;letter-spacing:0.022px;">Батарейки ААА</span>
<span class="t" style="left:294.86px;top:417.00px;font-size:14.5px;line-height:14.5px;color:#000;">49</span>
<span class="t" style="left:405.22px;top:417.00px;font-size:14.5px;line-height:14.5px;color:#000;">7</span>
<span class="t" style="left:493.00px;top:417.00px;font-size:14.5px;line-height:14.5px;color:#000;">343</span>
<span class="t" style="left:112.28px;top:679.00px;font-size:13px;line-height:13px;color:#00743f;font-weight:bold;letter-spacing:-0.051px;">microexcel.ru</span>
<span class="t" style="left:7.14px;top:705.00px;font-size:12px;line-height:12px;color:#262626;transform:scaleX(0.9663);transform-origin:0 0;">Укажите ячейку и нажмите ВВОД или выберите &quot;Вставить&quot;</span>
<span class="t" style="left:352.59px;top:705.00px;font-size:12px;line-height:12px;color:#262626;transform:scaleX(0.9111);transform-origin:0 0;">Среднее: 4946,708333</span>
<span class="t" style="left:483.09px;top:705.00px;font-size:12px;line-height:12px;color:#262626;transform:scaleX(0.9479);transform-origin:0 0;">Количество: 36</span>
<span class="t" style="left:578.84px;top:705.00px;font-size:12px;line-height:12px;color:#262626;transform:scaleX(0.9047);transform-origin:0 0;">Сумма: 118721</span>
<span class="t" style="left:923.84px;top:705.00px;font-size:12px;line-height:12px;color:#262626;transform:scaleX(0.8836);transform-origin:0 0;">100 %</span>
<span class="t" style="left:273.40px;top:82.00px;font-size:13px;line-height:13px;color:#444;-webkit-text-stroke:0.3px #444;">A</span>
<span class="t" style="left:296.40px;top:84.00px;font-size:9.7px;line-height:9.7px;color:#444;-webkit-text-stroke:0.3px #444;">A</span>
<span class="t" style="left:283.10px;top:111.00px;font-size:13.5px;line-height:13.5px;color:#444;-webkit-text-stroke:0.3px #444;">A</span>
<span class="t" style="left:400.09px;top:70.00px;font-size:11px;line-height:11px;color:#444;letter-spacing:0.259px;transform:scaleX(1.0800);transform-origin:0 0;">ab</span>
<span class="t" style="left:401.00px;top:78.00px;font-size:11px;line-height:11px;color:#444;">c</span>
<span class="t" style="left:900.30px;top:71.00px;font-size:9px;line-height:9px;color:#1e7fc2;font-weight:bold;">A</span>
<span class="t" style="left:900.30px;top:80.00px;font-size:9px;line-height:9px;color:#999;font-weight:bold;">Я</span>
<span class="t" style="left:223.30px;top:174.00px;font-size:15px;line-height:15px;color:#707070;font-family:'Liberation Serif', serif;font-weight:bold;font-style:italic;">f</span>
<span class="t" style="left:229.50px;top:178.00px;font-size:10px;line-height:10px;color:#707070;font-family:'Liberation Serif', serif;font-weight:bold;font-style:italic;">x</span>
<span class="t" style="left:459.70px;top:117.00px;font-size:9px;line-height:9px;color:#444;transform:scaleX(0.9);transform-origin:0 0;">0</span>
<span class="t" style="left:451.50px;top:124.00px;font-size:9px;line-height:9px;color:#444;transform:scaleX(1.0619);transform-origin:0 0;">,00</span>
<span class="t" style="left:473.50px;top:117.00px;font-size:9px;line-height:9px;color:#444;transform:scaleX(1.0699);transform-origin:0 0;">,00</span>
<span class="t" style="left:478.81px;top:124.00px;font-size:9px;line-height:9px;color:#444;transform:scaleX(1.0764);transform-origin:0 0;">,0</span>
<span class="t" style="left:388.00px;top:121.00px;font-size:11.5px;line-height:11.5px;color:#444;transform:rotate(-45deg);transform-origin:0 100%;">ab</span>
<svg style="left:0;top:0" width="974" height="723"><rect x="23.100" y="218.900" width="503" height="218.700" rx="6.500" ry="6.500" fill="none" stroke="#ff0000" stroke-width="4.200"/></svg>
</body></html>
